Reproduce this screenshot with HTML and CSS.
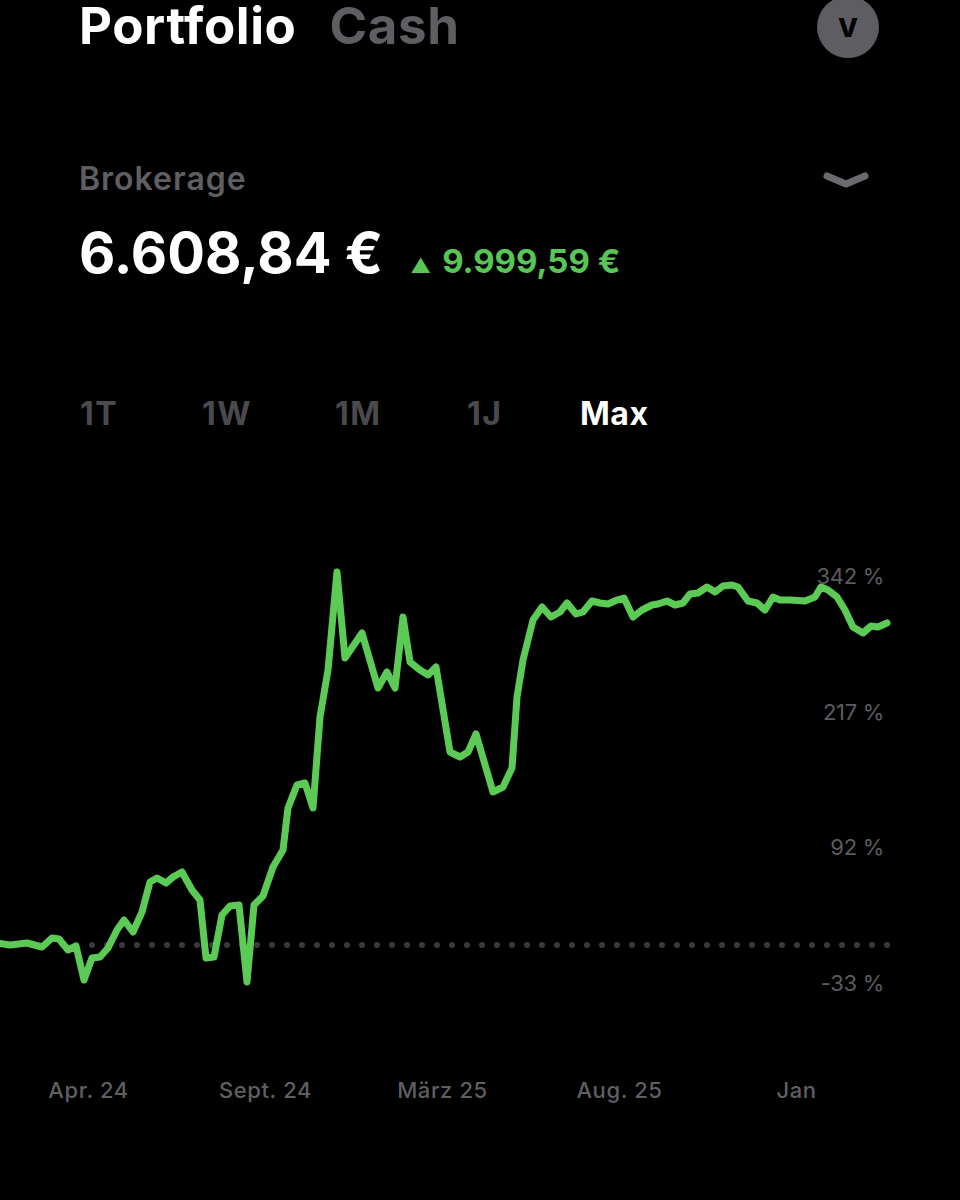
FILE: index.html
```html
<!DOCTYPE html>
<html lang="de">
<head>
<meta charset="utf-8">
<title>Portfolio</title>
<link rel="stylesheet" href="styles.css">
</head>
<body>
<div class="screen">
  <header class="top">
    <nav class="tabs-main">
      <span class="tab-main active">Portfolio</span>
      <span class="tab-main">Cash</span>
    </nav>
    <div class="avatar">V</div>
  </header>

  <section class="account">
    <div class="account-row">
      <span class="account-name">Brokerage</span>
      <svg class="chevron" width="48" height="20" viewBox="0 0 48 20"><path d="M5 5 L24 13 L43 5" fill="none" stroke="#6b6b6f" stroke-width="7" stroke-linecap="round" stroke-linejoin="round"/></svg>
    </div>
    <div class="value-row">
      <span class="value">6.608,84 €</span>
      <span class="change"><span class="tri">▲</span>9.999,59 €</span>
    </div>
  </section>

  <nav class="periods">
    <span class="period">1T</span>
    <span class="period">1W</span>
    <span class="period">1M</span>
    <span class="period">1J</span>
    <span class="period active">Max</span>
  </nav>

  <figure class="chart">
    <svg width="960" height="470" viewBox="0 540 960 470">
      <line x1="92" y1="945" x2="888" y2="945" stroke="#3a3a3c" stroke-width="6" stroke-linecap="round" stroke-dasharray="0 15"/>
      <polyline fill="none" stroke="#5ccb55" stroke-width="7" stroke-linejoin="round" stroke-linecap="round"
        points="-4,943 10,945 27,943 42,947 52,938 59,939 68,950 76,946 84,980 92,958 100,957 108,948 117,930 124,920 133,932 142,912 150,882 157,878 166,883 173,877 182,872 192,890 200,900 206,958 214,957 222,915 230,906 239,905 247,982 254,905 263,896 273,867 283,850 288,808 297,785 305,783 313,808 320,717 328,670 337,572 345,658 362,633 378,688 387,672 395,688 403,617 410,662 420,670 428,675 436,667 450,752 460,757 468,752 476,734 493,792 503,787 512,768 517,697 523,660 533,620 542,607 551,617 560,612 567,603 576,614 583,612 592,601 600,603 608,604 617,600 624,598 633,617 642,610 652,605 658,604 667,601 675,605 683,603 690,594 698,593 707,587 715,592 723,586 732,585 738,587 748,601 757,603 765,610 773,597 780,600 790,600 805,601 815,597 821,587 828,590 837,597 845,610 853,627 863,633 871,626 878,627 887,623"/>
      <text class="ylabel" x="884" y="584">342 %</text>
      <text class="ylabel" x="884" y="720">217 %</text>
      <text class="ylabel" x="884" y="855">92 %</text>
      <text class="ylabel" x="884" y="991">-33 %</text>
    </svg>
  </figure>

  <div class="months">
    <span class="month">Apr. 24</span>
    <span class="month">Sept. 24</span>
    <span class="month">März 25</span>
    <span class="month">Aug. 25</span>
    <span class="month">Jan</span>
  </div>
</div>
</body>
</html>
```

FILE: styles.css
```css
html, body {
  margin: 0;
  padding: 0;
  background: #000;
}

body {
  width: 960px;
  height: 1200px;
  overflow: hidden;
  font-family: Inter, "Noto Sans", "Liberation Sans", sans-serif;
  color: #fff;
}

.screen {
  display: flex;
  flex-direction: column;
}

.top {
  display: flex;
  justify-content: space-between;
  align-items: flex-start;
  padding: 0 81px 0 79px;
  height: 58px;
}

.tabs-main {
  display: flex;
  gap: 33px;
  align-items: baseline;
}

.tab-main {
  font-size: 51px;
  font-weight: 700;
  letter-spacing: 0.6px;
  line-height: 51px;
  color: #5f5f63;
}

.tab-main.active {
  color: #fff;
}

.avatar {
  margin-top: -4px;
  width: 62px;
  height: 62px;
  border-radius: 50%;
  background: #5e5e62;
  color: #000;
  font-size: 26px;
  font-weight: 800;
  display: flex;
  align-items: center;
  justify-content: center;
}

.account {
  padding: 0 90px 0 79px;
  margin-top: 101px;
}

.account-row {
  display: flex;
  justify-content: space-between;
  align-items: center;
  height: 40px;
}

.account-name {
  font-size: 32px;
  line-height: 40px;
  font-weight: 600;
  color: #5f5f63;
  letter-spacing: 1px;
}

.chevron {
  margin-top: 4px;
}

.value-row {
  display: flex;
  align-items: baseline;
  gap: 27px;
  margin-top: 21px;
}

.value {
  font-size: 56px;
  font-weight: 700;
  letter-spacing: 0;
  line-height: 66px;
}

.change {
  font-size: 33px;
  font-weight: 700;
  color: #58c654;
  display: flex;
  align-items: baseline;
  gap: 11px;
}

.tri {
  font-size: 20px;
}

.periods {
  display: grid;
  grid-template-columns: 122px 133px 132px 113px auto;
  padding-left: 80px;
  margin-top: 110px;
}

.period {
  font-size: 32px;
  font-weight: 700;
  color: #4a4a4e;
  line-height: 36px;
  letter-spacing: 1.5px;
}

.period.active {
  color: #fff;
  letter-spacing: 0.5px;
}

.chart {
  margin: 108px 0 0 0;
  height: 470px;
}

.chart svg {
  display: block;
}

.ylabel {
  font-family: Inter, "Noto Sans", sans-serif;
  font-size: 22px;
  fill: #5c5c60;
  text-anchor: end;
  letter-spacing: -0.3px;
}

.months {
  display: grid;
  grid-template-columns: repeat(5, 177px);
  margin-top: 67px;
}

.month {
  text-align: center;
  font-size: 22px;
  font-weight: 500;
  color: #5f5f63;
  letter-spacing: 0.6px;
}
```
